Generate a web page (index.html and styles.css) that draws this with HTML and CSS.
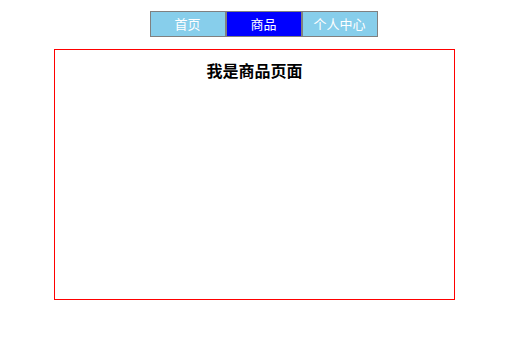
FILE: index.html
```html
<!DOCTYPE html>
<html lang="zh-CN">
<head>
<meta charset="utf-8">
<title>商品</title>
<link rel="stylesheet" href="styles.css">
</head>
<body>
<nav class="nav">
  <a class="nav-item" href="#">首页</a>
  <a class="nav-item active" href="#">商品</a>
  <a class="nav-item" href="#">个人中心</a>
</nav>
<div class="stage">
  <div class="page">
    <div class="page-title">我是商品页面</div>
  </div>
</div>
</body>
</html>
```

FILE: styles.css
```css
html, body {
  margin: 0;
  padding: 0;
  background: #ffffff;
}
body {
  font-family: "Microsoft YaHei", "Noto Sans CJK SC", "Noto Sans", sans-serif;
}
.nav {
  display: flex;
  justify-content: center;
  padding: 11px 0 0 20px;
}
.nav-item {
  display: block;
  width: 74px;
  height: 24px;
  line-height: 24px;
  border: 1px solid #808080;
  background: #87ceeb;
  color: #ffffff;
  font-size: 13px;
  text-align: center;
  text-decoration: none;
}
.nav-item.active {
  background: #0000ff;
}
.stage {
  padding-left: 2px;
  margin-top: 12px;
}
.page {
  box-sizing: border-box;
  width: 401px;
  height: 251px;
  margin: 0 auto;
  border: 1px solid #ff0000;
  padding-top: 9px;
}
.page-title {
  font-size: 16px;
  font-weight: bold;
  line-height: 22px;
  text-align: center;
  color: #000000;
}
```
